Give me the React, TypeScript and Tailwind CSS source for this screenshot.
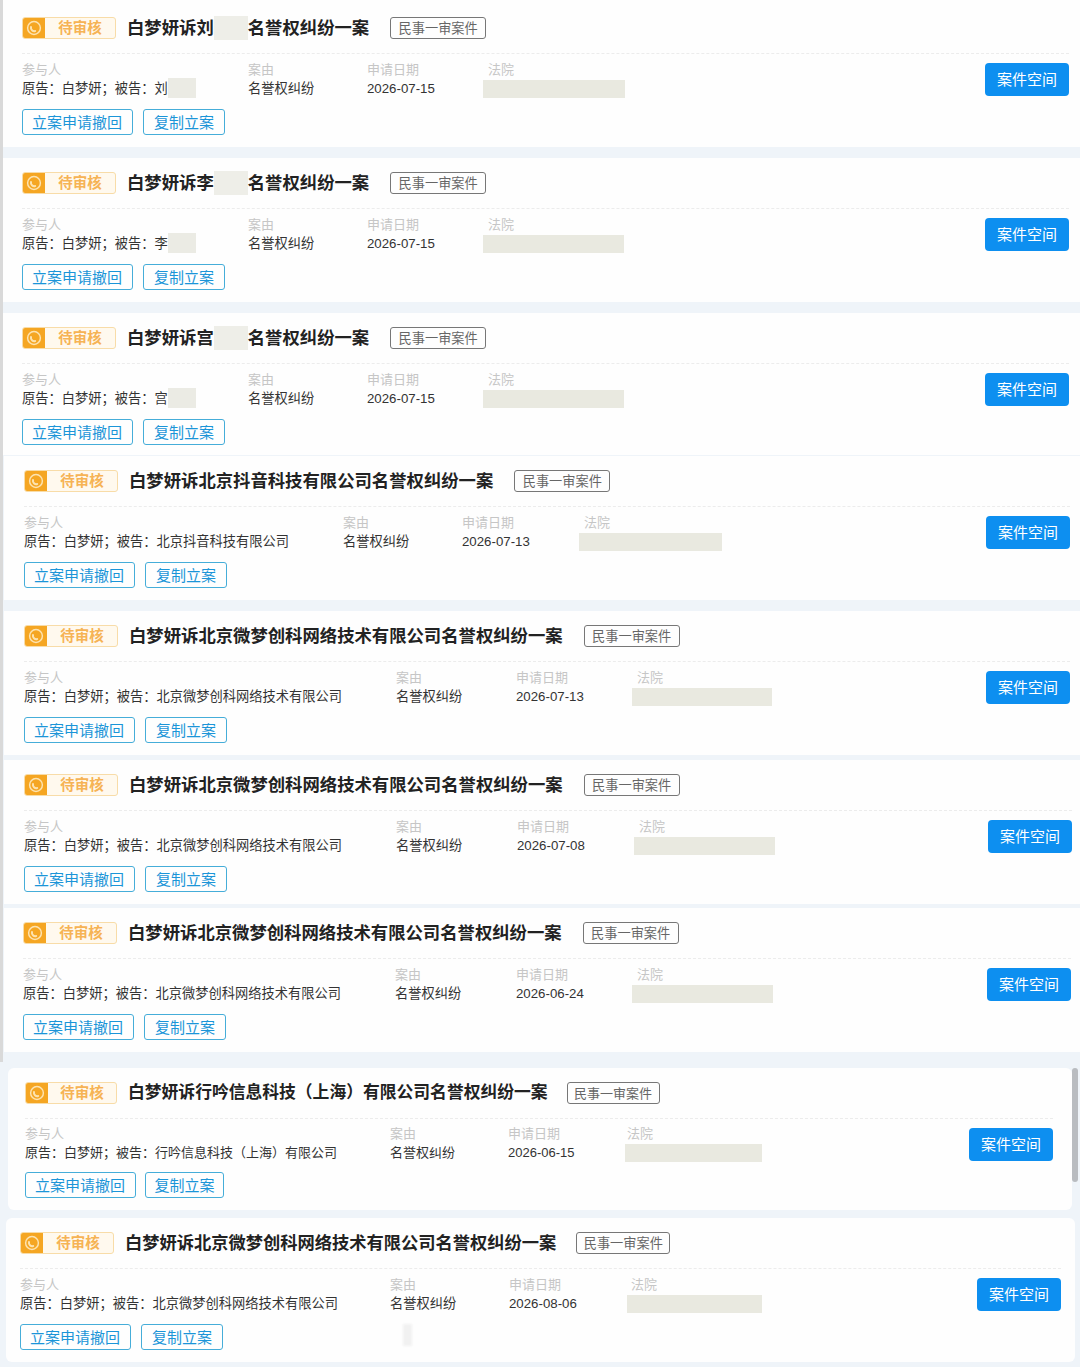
import React from 'react'

interface CaseItem {
  name: string
  hiddenName?: boolean
  defendant: string
  date: string
  card: string
  cols: string
  court: string
  title?: string
  tag?: string
  small?: boolean
}

const cases: CaseItem[] = [
  { name: '刘', hiddenName: true, defendant: '刘', date: '2026-07-15', card: 'ml-[3px] pt-[17px] pb-[12px] pl-[19px] pr-[11px]', cols: 'grid-cols-[226px_119px_116px_auto]', court: 'w-[142px]' },
  { name: '李', hiddenName: true, defendant: '李', date: '2026-07-15', card: 'ml-[3px] mt-[11px] pt-[14px] pb-[12px] pl-[19px] pr-[11px]', cols: 'grid-cols-[226px_119px_116px_auto]', court: 'w-[141px]' },
  { name: '宫', hiddenName: true, defendant: '宫', date: '2026-07-15', card: 'ml-[3px] mt-[11px] pt-[14px] pb-[10px] pl-[19px] pr-[11px]', cols: 'grid-cols-[226px_119px_116px_auto]', court: 'w-[141px]' },
  { name: '北京抖音科技有限公司', defendant: '北京抖音科技有限公司', date: '2026-07-13', card: 'ml-[4px] mt-[1px] pt-[14px] pb-[12px] pl-[20px] pr-[10px]', cols: 'grid-cols-[319px_119px_117px_auto]', court: 'w-[143px]' },
  { name: '北京微梦创科网络技术有限公司', defendant: '北京微梦创科网络技术有限公司', date: '2026-07-13', card: 'ml-[4px] mt-[11px] pt-[14px] pb-[12px] pl-[20px] pr-[10px]', cols: 'grid-cols-[372px_120px_116px_auto]', court: 'w-[140px]' },
  { name: '北京微梦创科网络技术有限公司', defendant: '北京微梦创科网络技术有限公司', date: '2026-07-08', card: 'ml-[4px] mt-[5px] pt-[14px] pb-[12px] pl-[20px] pr-[8px]', cols: 'grid-cols-[372px_121px_117px_auto]', court: 'w-[141px]' },
  { name: '北京微梦创科网络技术有限公司', defendant: '北京微梦创科网络技术有限公司', date: '2026-06-24', card: 'ml-[4px] mt-[4px] pt-[14px] pb-[12px] pl-[19px] pr-[9px]', cols: 'grid-cols-[372px_121px_116px_auto]', court: 'w-[141px]' },
  { name: '行吟信息科技（上海）有限公司', defendant: '行吟信息科技（上海）有限公司', date: '2026-06-15', card: 'ml-[8px] mr-[8px] mt-[16px] rounded-md pt-[14px] pb-[12px] pl-[17px] pr-[19px]', cols: 'grid-cols-[365px_118px_117px_auto]', court: 'w-[137px]', small: true },
  { name: '北京微梦创科网络技术有限公司', defendant: '北京微梦创科网络技术有限公司', date: '2026-08-06', card: 'ml-[6px] mr-[5px] mt-[8px] rounded-md pt-[14px] pb-[12px] pl-[14px] pr-[14px]', cols: 'grid-cols-[370px_119px_117px_auto]', court: 'ml-px w-[135px]', title: 'text-[17.25px]', tag: 'ml-[20px] w-[94px] text-[13.2px]' },
]

function StatusBadge({ small }: { small?: boolean }) {
  return (
    <div className={`flex h-[22px] shrink-0 overflow-hidden rounded-[3px] border border-[#f8dca8] bg-[#fff9ee] ${small ? 'w-[92px]' : 'w-[94px]'}`}>
      <div className="flex w-[22px] shrink-0 items-center justify-center bg-[#f5a623]">
        <svg width="18" height="18" viewBox="0 0 18 18" fill="none">
          <circle cx="9" cy="9" r="6.4" stroke="#fde3b0" strokeWidth="1.5" />
          <path d="M6 8a3.4 3.4 0 0 0 4.2 4" stroke="#fde3b0" strokeWidth="2" strokeLinecap="round" />
        </svg>
      </div>
      <span className="flex-1 text-center text-[14.5px] font-bold leading-[20px] text-[#f6b355]">待审核</span>
    </div>
  )
}

function Label({ children, className = '' }: { children: React.ReactNode; className?: string }) {
  return <div className={`h-[18px] text-[13px] leading-[18px] text-[#c6c6c6] ${className}`}>{children}</div>
}

function Value({ children, small }: { children: React.ReactNode; small?: boolean }) {
  return (
    <div className={`flex h-[18px] items-center whitespace-nowrap leading-[18px] text-[#333] ${small ? 'text-[13px]' : 'text-[13.25px]'}`}>
      {children}
    </div>
  )
}

function CaseCard({ item }: { item: CaseItem }) {
  const { small } = item
  const titleSize = item.title ?? (small ? 'text-[16.8px]' : 'text-[17.35px]')
  const tagSize = item.tag ?? (small ? 'ml-[19px] w-[93px] text-[13px]' : 'ml-[21px] w-[96px] text-[13.2px]')
  return (
    <div className={`bg-[#fefefe] ${item.card}`}>
      {/* Title row */}
      <div className="flex h-[22px] items-center">
        <StatusBadge small={small} />
        <h3 className={`ml-[11px] flex items-center whitespace-nowrap font-bold leading-[24px] text-[#222] ${titleSize}`}>
          白梦妍诉{item.name}
          {item.hiddenName && <span className="h-[24px] w-[34px] bg-[#eeeee8]" />}
          名誉权纠纷一案
        </h3>
        <span className={`flex h-[22px] shrink-0 items-center justify-center rounded-[3px] border border-[#777] pt-px text-[#666] ${tagSize}`}>
          民事一审案件
        </span>
      </div>

      <div className="mt-[14px] border-t border-dashed border-[#ececec]" />

      <div className="flex items-start justify-between">
        <div>
          <div className={`grid ${small ? 'mt-[6px]' : 'mt-[7px]'} ${item.cols}`}>
            <div>
              <Label>参与人</Label>
              <Value small={small}>
                <span className="pt-px">原告：白梦妍；被告：{item.defendant}</span>
                {item.hiddenName && <span className="h-[20px] w-[28px] bg-[#ebebe4]" />}
              </Value>
            </div>
            <div>
              <Label>案由</Label>
              <Value small={small}>
                <span className="pt-px">名誉权纠纷</span>
              </Value>
            </div>
            <div>
              <Label>申请日期</Label>
              <Value small={small}>
                <span className="pt-px">{item.date}</span>
              </Value>
            </div>
            <div>
              <Label className={small ? 'pl-[2px]' : 'pl-[5px]'}>法院</Label>
              <div className={`mt-px h-[18px] bg-[#e9e9e0] ${item.court}`} />
            </div>
          </div>
          <div className={`flex ${small ? 'mt-[10px] gap-[9px]' : 'mt-[11px] gap-[10px]'}`}>
            <button className="h-[26px] w-[111px] rounded-[3px] border border-[#45add9] pr-px pt-[2px] text-[15px] text-[#1b95d8]">立案申请撤回</button>
            <button className={`h-[26px] rounded-[3px] border border-[#45add9] pt-[2px] text-[15px] text-[#1b95d8] ${small ? 'w-[79px]' : 'w-[82px]'}`}>复制立案</button>
          </div>
        </div>
        <button className="mt-[9px] h-[33px] w-[84px] rounded-[4px] bg-[#0d8ff0] pt-px text-[15px] text-white">案件空间</button>
      </div>
    </div>
  )
}

export default function App() {
  return (
    <div
      className="relative h-[1367px] w-[1080px] overflow-hidden bg-[#eff4f9] text-[#333]"
      style={{ fontFamily: '"Liberation Sans", "Noto Sans CJK SC", sans-serif' }}
    >
      {/* left edge of the window behind the list */}
      <div className="absolute left-0 top-0 h-[1062px] w-[3px] bg-[#d9d9d9]" />
      {cases.map((item, i) => (
        <CaseCard key={i} item={item} />
      ))}
      {/* scrollbar */}
      <div className="absolute right-[2px] top-[1068px] h-[114px] w-[6px] rounded-full bg-[#b9bcc0]" />
      {/* faint smudge left over in the last card */}
      <div className="absolute left-[403px] top-[1324px] h-[22px] w-[9px] bg-[#f1f1f1] blur-[1px]" />
    </div>
  )
}
